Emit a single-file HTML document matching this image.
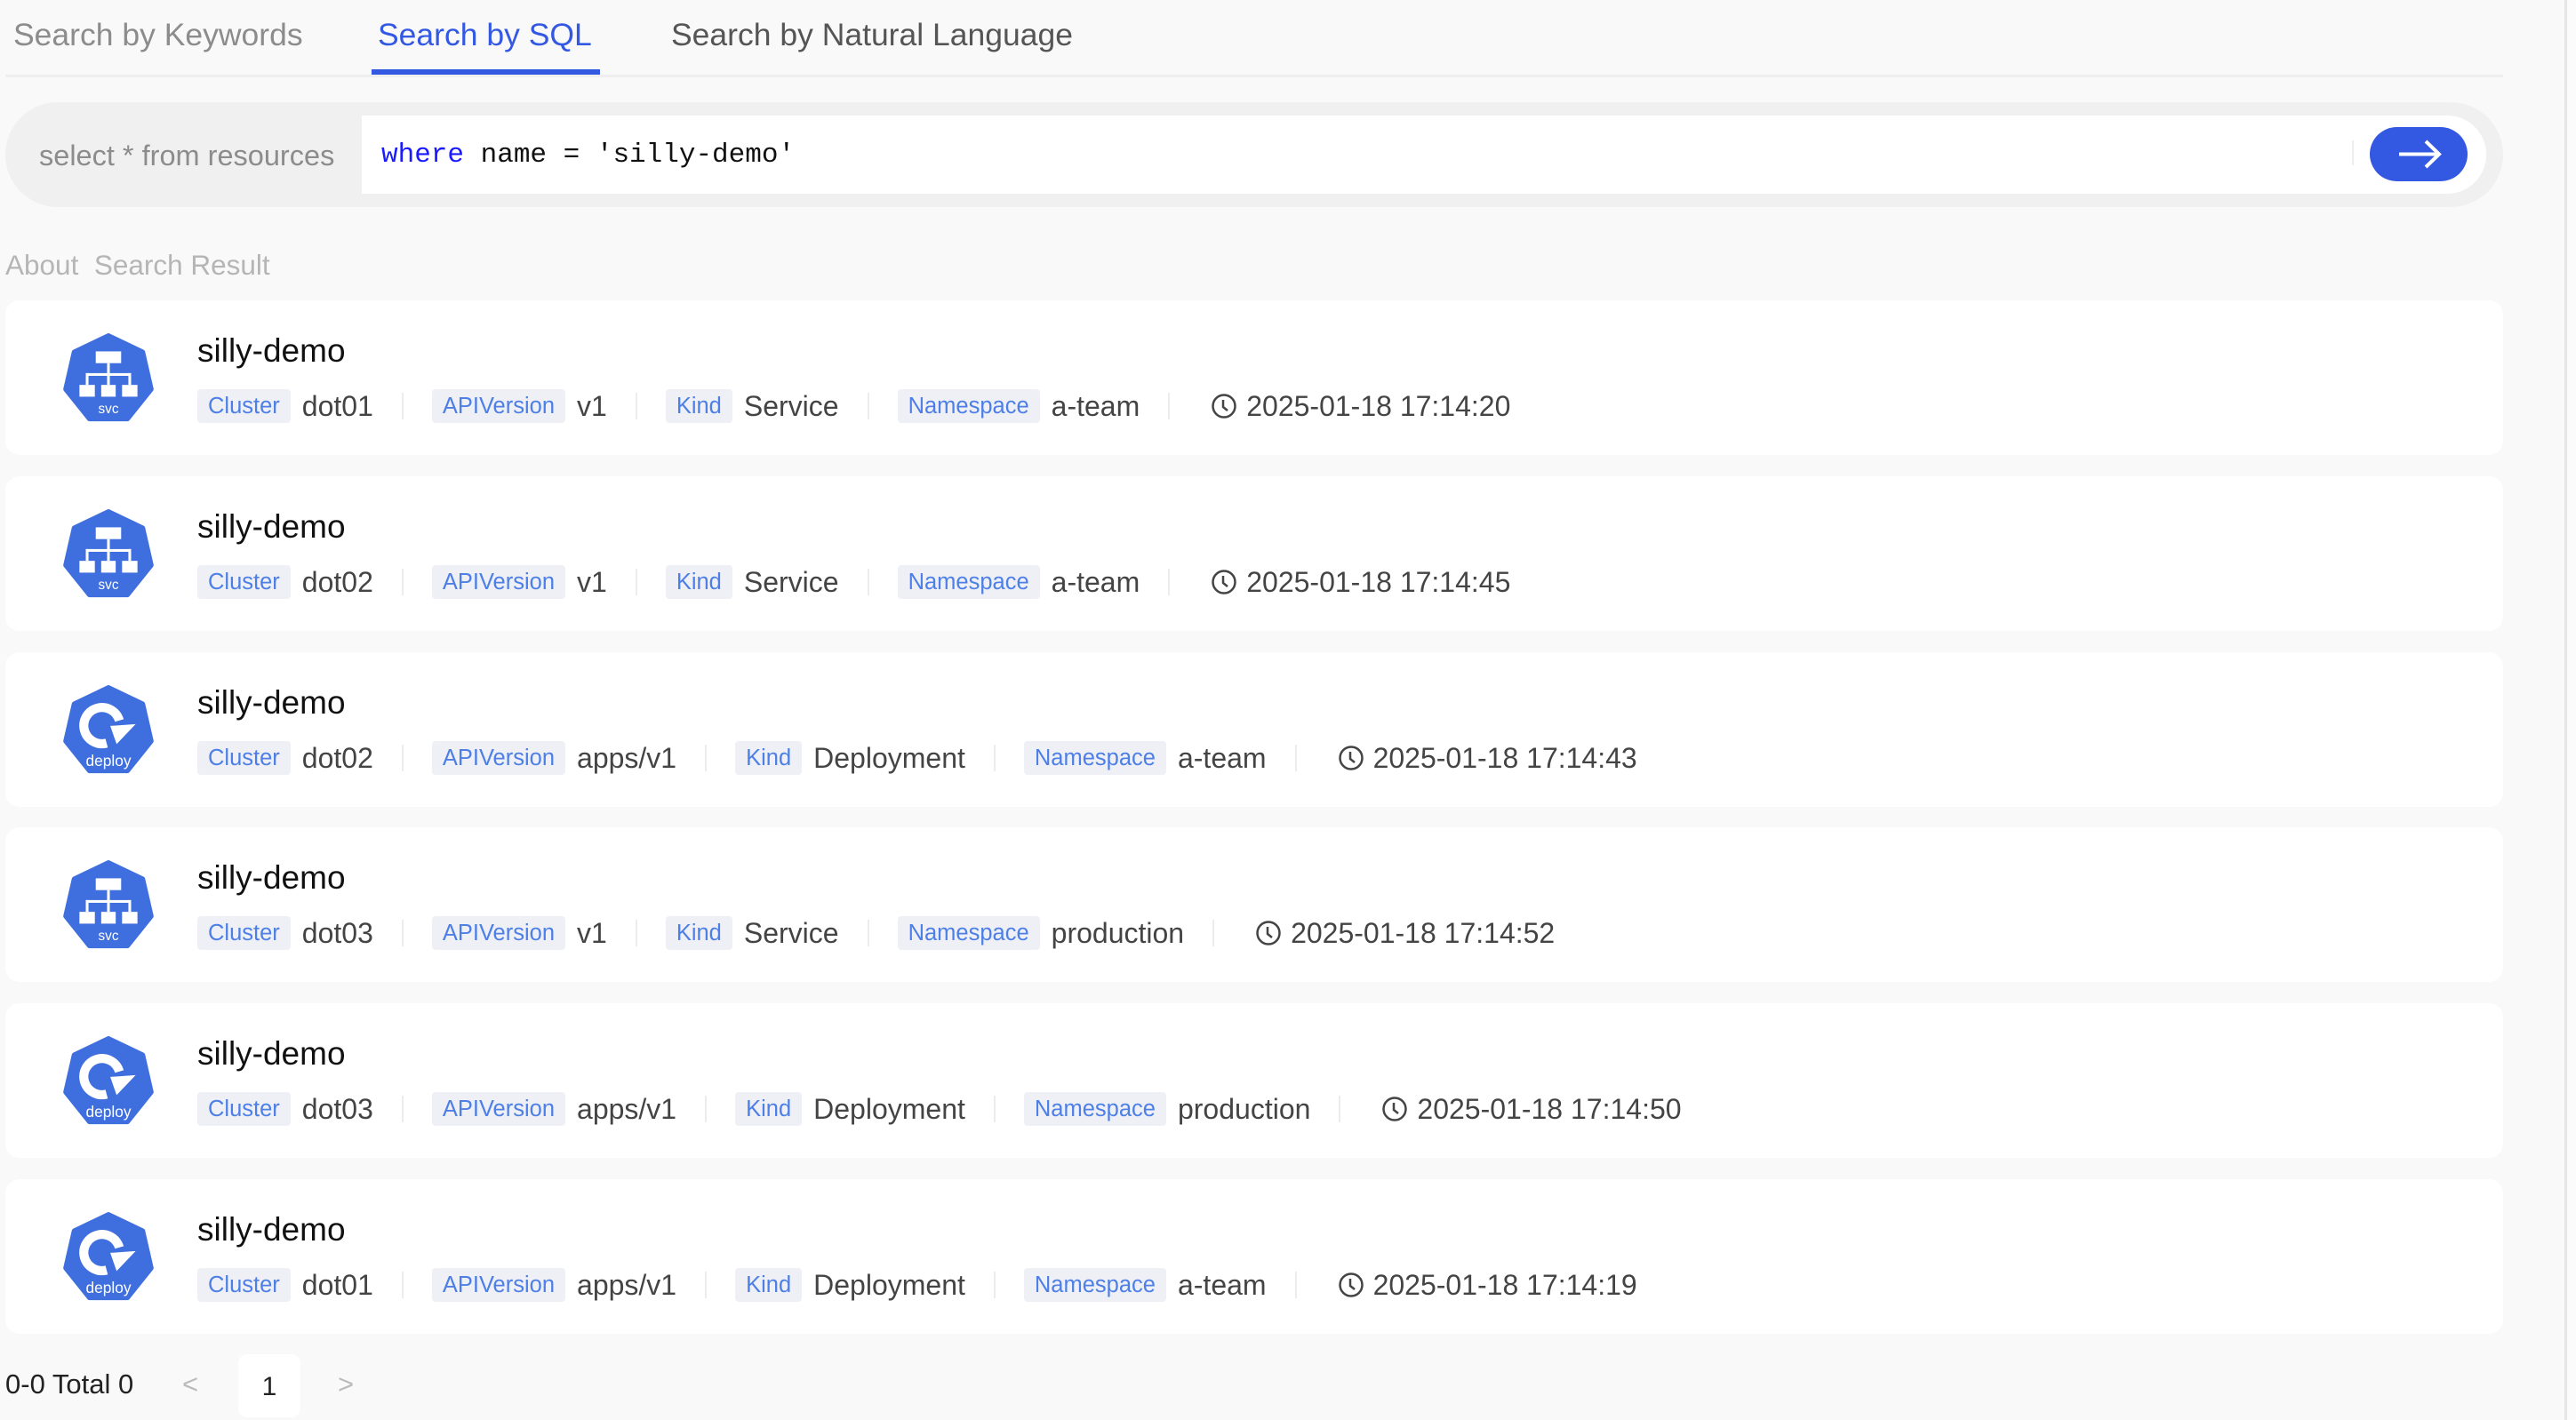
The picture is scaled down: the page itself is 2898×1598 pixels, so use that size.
<!DOCTYPE html>
<html><head><meta charset="utf-8"><style>
*{box-sizing:border-box;margin:0;padding:0}
body{width:2898px;height:1598px;background:#f9f9f9;font-family:"Liberation Sans",sans-serif;position:relative;overflow:hidden}
.vline{position:absolute;left:2885px;top:0;width:3px;height:1598px;background:#e6e6e6}
.rightbg{position:absolute;left:2888px;top:0;width:10px;height:1598px;background:#fbfbfb}
.tab{position:absolute;top:14px;font-size:35.5px;color:#555;line-height:50px;white-space:nowrap}
.tabline{position:absolute;left:6px;top:84px;width:2810px;height:3px;background:#efefef}
.ul{position:absolute;left:418px;top:78px;width:257px;height:6px;background:#3358e2}
.bar{position:absolute;left:6px;top:115px;width:2810px;height:118px;background:#f0f0f0;border-radius:59px}
.inner{position:absolute;left:407px;top:130px;width:2390px;height:88px;background:#fff;border-radius:0 44px 44px 0}
.sel{position:absolute;left:44px;top:155px;font-size:32.5px;color:#8c8c8c;line-height:40px;white-space:nowrap}
.code{position:absolute;left:429px;top:155px;font-family:"Liberation Mono",monospace;font-size:31px;color:#111;line-height:40px;white-space:pre}
.code b{font-weight:normal;color:#1a1aff}
.div{position:absolute;left:2646px;top:158px;width:2px;height:28px;background:#eee}
.btn{position:absolute;left:2666px;top:143px;width:110px;height:61px;background:#3358e2;border-radius:31px}
.about{position:absolute;left:6px;top:280px;font-size:31.5px;color:#b5b5b5;white-space:pre;line-height:36px}
.card{position:absolute;left:6px;width:2810px;height:174px;background:#fff;border-radius:16px}
.icon{position:absolute;left:62px;top:36px;width:108px;height:102px}
.title{position:absolute;left:216px;top:35px;font-size:37px;color:#111;line-height:44px}
.row{position:absolute;left:216px;top:99px;height:40px;display:flex;align-items:center;white-space:nowrap}
.tag{background:#eef0f6;color:#4d7fe6;font-size:25.5px;height:38px;line-height:38px;padding:0 12px;border-radius:4px;margin-right:13px}
.val{font-size:32px;color:#444}
.sep{width:2px;height:30px;background:#ececec;margin:0 32px}
.clk{margin:0 10px 0 14px}
.pg{position:absolute;top:1538px;font-size:31px;color:#222;line-height:40px}
.pbox{position:absolute;left:268px;top:1524px;width:70px;height:71px;background:#fff;border-radius:10px;font-size:30px;text-align:center;line-height:73px;color:#222}
</style></head><body>
<div class="rightbg"></div><div class="vline"></div>
<div class="tab" style="left:15px;color:#8c8c8c">Search by Keywords</div>
<div class="tab" style="left:425px;color:#3358e2">Search by SQL</div>
<div class="tab" style="left:755px">Search by Natural Language</div>
<div class="tabline"></div><div class="ul"></div>
<div class="bar"></div><div class="inner"></div>
<div class="sel">select * from resources</div>
<div class="code"><b>where</b> name = 'silly-demo'</div>
<div class="div"></div>
<div class="btn"><svg width="110" height="61" viewBox="0 0 110 61"><path d="M33 30.5H77M63 16L78 30.5L63 45" fill="none" stroke="#fff" stroke-width="4"/></svg></div>
<div class="about">About  Search Result</div>

<svg width="0" height="0" style="position:absolute">
<defs>
<g id="hept"><polygon points="50,4 87.5,22 96.8,62.7 70.8,95.2 29.2,95.2 3.2,62.7 12.5,22" fill="#3f6fde" stroke="#3f6fde" stroke-width="6" stroke-linejoin="round"/></g>
<g id="svcg" fill="#fff"><rect x="36" y="21" width="28" height="13"/><rect x="18" y="58" width="17" height="13"/><rect x="42" y="58" width="16" height="13"/><rect x="65" y="58" width="17" height="13"/><rect x="48.5" y="34" width="3" height="24"/><rect x="25" y="45" width="50" height="3"/><rect x="25" y="45" width="3" height="13"/><rect x="72" y="45" width="3" height="13"/></g>
<g id="depg"><path d="M62 40 A20 20 0 1 0 48 65" fill="none" stroke="#fff" stroke-width="10"/><polygon points="52,46 80,44 59,66" fill="#fff"/></g>
</defs></svg>

<div class="card" style="top:338px">
<svg class="icon" viewBox="0 0 100 100"><use href="#hept"/><use href="#svcg"/><text x="50" y="89" font-size="15" fill="#fff" text-anchor="middle" font-family="Liberation Sans">svc</text></svg>
<div class="title">silly-demo</div>
<div class="row"><span class="tag">Cluster</span><span class="val">dot01</span><span class="sep"></span><span class="tag">APIVersion</span><span class="val">v1</span><span class="sep"></span><span class="tag">Kind</span><span class="val">Service</span><span class="sep"></span><span class="tag">Namespace</span><span class="val">a-team</span><span class="sep"></span><svg class="clk" width="30" height="30" viewBox="0 0 30 30"><circle cx="15" cy="15" r="12.5" fill="none" stroke="#444" stroke-width="2.5"/><path d="M14 8V16L19 20" fill="none" stroke="#444" stroke-width="2.5"/></svg><span class="val">2025-01-18 17:14:20</span></div>
</div>

<div class="card" style="top:536px">
<svg class="icon" viewBox="0 0 100 100"><use href="#hept"/><use href="#svcg"/><text x="50" y="89" font-size="15" fill="#fff" text-anchor="middle" font-family="Liberation Sans">svc</text></svg>
<div class="title">silly-demo</div>
<div class="row"><span class="tag">Cluster</span><span class="val">dot02</span><span class="sep"></span><span class="tag">APIVersion</span><span class="val">v1</span><span class="sep"></span><span class="tag">Kind</span><span class="val">Service</span><span class="sep"></span><span class="tag">Namespace</span><span class="val">a-team</span><span class="sep"></span><svg class="clk" width="30" height="30" viewBox="0 0 30 30"><circle cx="15" cy="15" r="12.5" fill="none" stroke="#444" stroke-width="2.5"/><path d="M14 8V16L19 20" fill="none" stroke="#444" stroke-width="2.5"/></svg><span class="val">2025-01-18 17:14:45</span></div>
</div>

<div class="card" style="top:734px">
<svg class="icon" viewBox="0 0 100 100"><use href="#hept"/><use href="#depg"/><text x="50" y="90" font-size="17" fill="#fff" text-anchor="middle" font-family="Liberation Sans">deploy</text></svg>
<div class="title">silly-demo</div>
<div class="row"><span class="tag">Cluster</span><span class="val">dot02</span><span class="sep"></span><span class="tag">APIVersion</span><span class="val">apps/v1</span><span class="sep"></span><span class="tag">Kind</span><span class="val">Deployment</span><span class="sep"></span><span class="tag">Namespace</span><span class="val">a-team</span><span class="sep"></span><svg class="clk" width="30" height="30" viewBox="0 0 30 30"><circle cx="15" cy="15" r="12.5" fill="none" stroke="#444" stroke-width="2.5"/><path d="M14 8V16L19 20" fill="none" stroke="#444" stroke-width="2.5"/></svg><span class="val">2025-01-18 17:14:43</span></div>
</div>

<div class="card" style="top:931px">
<svg class="icon" viewBox="0 0 100 100"><use href="#hept"/><use href="#svcg"/><text x="50" y="89" font-size="15" fill="#fff" text-anchor="middle" font-family="Liberation Sans">svc</text></svg>
<div class="title">silly-demo</div>
<div class="row"><span class="tag">Cluster</span><span class="val">dot03</span><span class="sep"></span><span class="tag">APIVersion</span><span class="val">v1</span><span class="sep"></span><span class="tag">Kind</span><span class="val">Service</span><span class="sep"></span><span class="tag">Namespace</span><span class="val">production</span><span class="sep"></span><svg class="clk" width="30" height="30" viewBox="0 0 30 30"><circle cx="15" cy="15" r="12.5" fill="none" stroke="#444" stroke-width="2.5"/><path d="M14 8V16L19 20" fill="none" stroke="#444" stroke-width="2.5"/></svg><span class="val">2025-01-18 17:14:52</span></div>
</div>

<div class="card" style="top:1129px">
<svg class="icon" viewBox="0 0 100 100"><use href="#hept"/><use href="#depg"/><text x="50" y="90" font-size="17" fill="#fff" text-anchor="middle" font-family="Liberation Sans">deploy</text></svg>
<div class="title">silly-demo</div>
<div class="row"><span class="tag">Cluster</span><span class="val">dot03</span><span class="sep"></span><span class="tag">APIVersion</span><span class="val">apps/v1</span><span class="sep"></span><span class="tag">Kind</span><span class="val">Deployment</span><span class="sep"></span><span class="tag">Namespace</span><span class="val">production</span><span class="sep"></span><svg class="clk" width="30" height="30" viewBox="0 0 30 30"><circle cx="15" cy="15" r="12.5" fill="none" stroke="#444" stroke-width="2.5"/><path d="M14 8V16L19 20" fill="none" stroke="#444" stroke-width="2.5"/></svg><span class="val">2025-01-18 17:14:50</span></div>
</div>

<div class="card" style="top:1327px">
<svg class="icon" viewBox="0 0 100 100"><use href="#hept"/><use href="#depg"/><text x="50" y="90" font-size="17" fill="#fff" text-anchor="middle" font-family="Liberation Sans">deploy</text></svg>
<div class="title">silly-demo</div>
<div class="row"><span class="tag">Cluster</span><span class="val">dot01</span><span class="sep"></span><span class="tag">APIVersion</span><span class="val">apps/v1</span><span class="sep"></span><span class="tag">Kind</span><span class="val">Deployment</span><span class="sep"></span><span class="tag">Namespace</span><span class="val">a-team</span><span class="sep"></span><svg class="clk" width="30" height="30" viewBox="0 0 30 30"><circle cx="15" cy="15" r="12.5" fill="none" stroke="#444" stroke-width="2.5"/><path d="M14 8V16L19 20" fill="none" stroke="#444" stroke-width="2.5"/></svg><span class="val">2025-01-18 17:14:19</span></div>
</div>

<div class="pg" style="left:6px">0-0 Total 0</div>
<div class="pg" style="left:205px;color:#bbb">&lt;</div>
<div class="pbox">1</div>
<div class="pg" style="left:380px;color:#bbb">&gt;</div>
</body></html>
